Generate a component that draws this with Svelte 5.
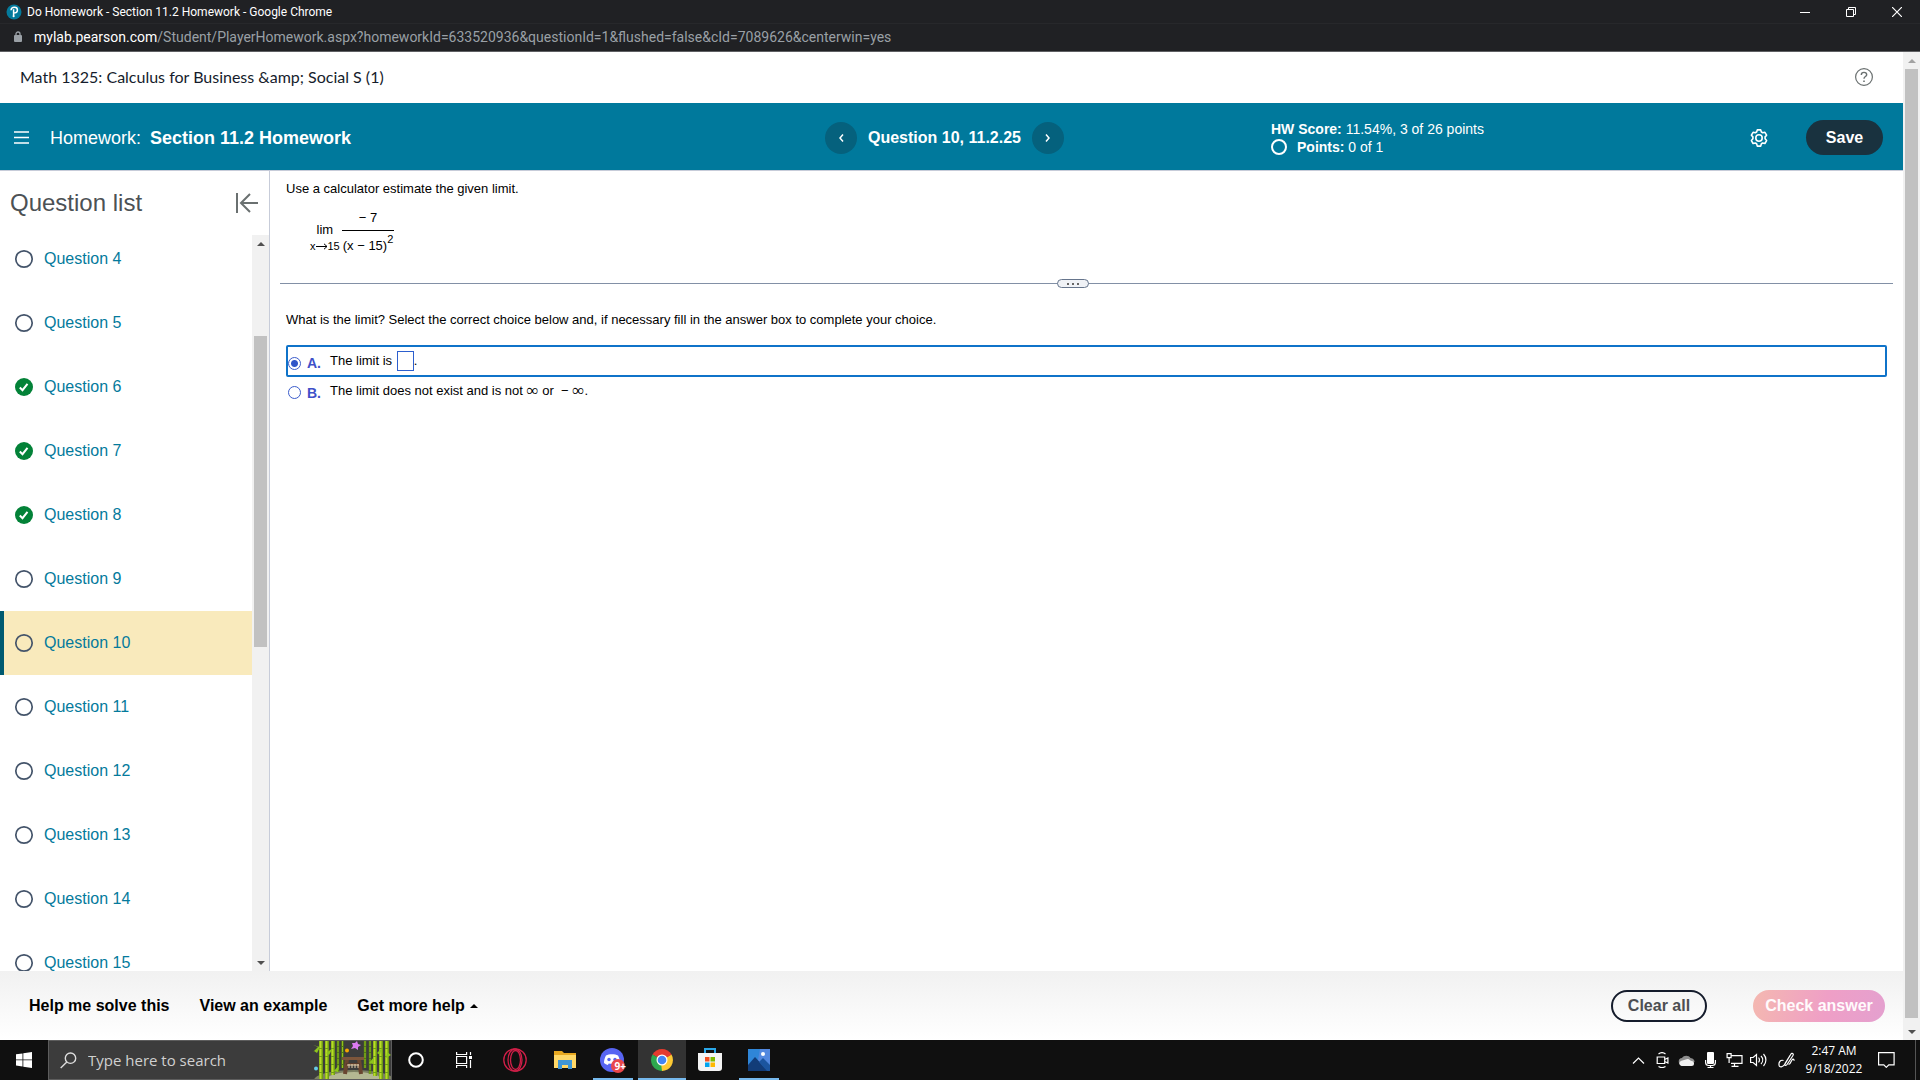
<script>
  const questions = [
    { n: 4 }, { n: 5 }, { n: 6, done: true }, { n: 7, done: true }, { n: 8, done: true }, { n: 9 },
    { n: 10, current: true }, { n: 11 }, { n: 12 }, { n: 13 }, { n: 14 }, { n: 15 },
  ];
  let choice = $state('A');
  let answer = $state('');
  let search = $state('');
</script>

<div class="screen">
  <header class="titlebar">
    <svg class="logo" width="16" height="16" viewBox="0 0 16 16" aria-hidden="true">
      <circle cx="8" cy="8" r="7.5" fill="#047a9c" />
      <path d="M5 6.2C5.2 4.2 6.600 3.300 8.400 3.300c2 0 3 1.100 3 2.600 0 1.900-1.500 3.100-3.900 3.100M7.600 5.300V12.200" fill="none" stroke="#fff" stroke-width="1.500" />
      <circle cx="7.600" cy="12.200" r="1" fill="#fff" />
    </svg>
    <span class="wintitle">Do Homework - Section 11.2 Homework - Google Chrome</span>
    <button class="winbtn" aria-label="Minimize"><svg width="10" height="10" viewBox="0 0 10 10"><path d="M0 5.500h10" stroke="#fff" /></svg></button>
    <button class="winbtn" aria-label="Restore"><svg width="10" height="10" viewBox="0 0 10 10"><path d="M.5 2.500h7v7h-7zM2.500 2.500v-2h7v7h-2" fill="none" stroke="#fff" /></svg></button>
    <button class="winbtn" aria-label="Close"><svg width="10" height="10" viewBox="0 0 10 10"><path d="M0 0l10 10M10 0L0 10" stroke="#fff" stroke-width="1.200" /></svg></button>
  </header>
  <div class="urlbar">
    <svg width="8" height="12" viewBox="0 0 8 12" aria-hidden="true"><path d="M2 5V3a2 2 0 0 1 4 0v2" fill="none" stroke="#9aa0a6" stroke-width="1.300" /><rect y="4" width="8" height="7" rx="1" fill="#9aa0a6" /></svg>
    <span class="url"><b>mylab.pearson.com</b>/Student/PlayerHomework.aspx?homeworkId=633520936&amp;questionId=1&amp;flushed=false&amp;cId=7089626&amp;centerwin=yes</span>
  </div>

  <div class="viewport">
    <div class="page">
      <div class="course">
        <span>Math 1325: Calculus for Business &amp;amp; Social S (1)</span>
        <button class="plain" aria-label="Help">
          <svg width="18" height="18" viewBox="0 0 18 18" fill="none" stroke="#6a7070"><circle cx="9" cy="9" r="8.400" stroke-width="1.200" /><path d="M6.300 7c0-1.700 1.100-2.600 2.700-2.600s2.700.9 2.700 2.300c0 1.900-2.700 1.800-2.700 4.100" stroke-width="1.400" /><path d="M9 12.400v1.600" stroke-width="1.600" /></svg>
        </button>
      </div>

      <div class="bar">
        <div class="assignment">
          <button class="plain" aria-label="Menu"><svg width="15" height="13" viewBox="0 0 15 13"><path d="M0 1h15M0 6.500h15M0 12h15" stroke="#fff" stroke-width="1.500" /></svg></button>
          <h1>Homework:<b>Section 11.2 Homework</b></h1>
        </div>
        <nav class="pager" aria-label="Question">
          <button class="round" aria-label="Previous"><svg width="5" height="8" viewBox="0 0 5 8"><path d="M4 .5L1 4l3 3.500" /></svg></button>
          <b>Question 10, 11.2.25</b>
          <button class="round" aria-label="Next"><svg width="5" height="8" viewBox="0 0 5 8"><path d="M1 .5L4 4 1 7.500" /></svg></button>
        </nav>
        <div class="score">
          <div><b>HW Score:</b> 11.54%, 3 of 26 points</div>
          <div class="points"><i></i><span><b>Points:</b> 0 of 1</span></div>
        </div>
        <div class="actions">
          <button class="plain" aria-label="Settings">
            <svg width="18" height="18" viewBox="0 0 18 18" fill="none" stroke="#fff" stroke-width="1.600"><circle cx="9" cy="9" r="3.200" /><path stroke-linejoin="round" d="M7.300.9h3.400l.7 2.100 1.300.8 2.200-.5 1.700 2.900-1.500 1.700v1.900l1.500 1.800-1.700 2.900-2.200-.5-1.300.8-.7 2.300H7.300l-.7-2.300-1.300-.8-2.200.5-1.700-2.900 1.500-1.800V7.900L1.400 6.200l1.700-2.900 2.200.5L6.600 3z" /></svg>
          </button>
          <button class="save">Save</button>
        </div>
      </div>

      <div class="main">
        <aside>
          <div class="listhead">
            <h2>Question list</h2>
            <button class="plain" aria-label="Collapse list"><svg width="22" height="20" viewBox="0 0 22 20" fill="none" stroke="#6a7070" stroke-width="2"><path d="M1 0v20M22 10H6M14 1l-9 9 9 9" /></svg></button>
          </div>
          <div class="scroller">
            <ul>
              {#each questions as q}
                <li class:current={q.current}>
                  <svg width="20" height="20" viewBox="0 0 20 20" aria-hidden="true">
                    {#if q.done}
                      <circle cx="10" cy="10" r="9" fill="#038238" /><path d="M5.800 10.500l2.700 2.700 5-6.400" fill="none" stroke="#fff" stroke-width="2" />
                    {:else}
                      <circle cx="10" cy="10" r="8.200" fill="none" stroke="#44546a" stroke-width="1.700" />
                    {/if}
                  </svg>
                  <a href="#q{q.n}">Question {q.n}</a>
                </li>
              {/each}
            </ul>
            <div class="track inner" aria-hidden="true"><span class="up"></span><span class="thumb"></span><span class="down"></span></div>
          </div>
        </aside>

        <section class="question">
          <div class="prompt">
            <p>Use a calculator estimate the given limit.</p>
            <div class="math">
              <span class="lim"><span>lim</span><small>x<svg width="12" height="7" viewBox="0 0 12 7"><path d="M0 3.500h11M8 .8l3 2.700-3 2.700" fill="none" stroke="#000" /></svg>15</small></span>
              <span class="frac"><span class="num">&minus; 7</span><span class="den">(x &minus; 15)<sup>2</sup></span></span>
            </div>
          </div>
          <div class="divider"><button aria-label="Resize panels"><i></i><i></i><i></i></button></div>
          <form class="answers">
            <p>What is the limit? Select the correct choice below and, if necessary fill in the answer box to complete your choice.</p>
            <div class="choice" class:selected={choice === 'A'}>
              <input id="a" type="radio" name="c" value="A" bind:group={choice} />
              <label for="a">A.</label>
              <span class="text">The limit is <input class="box" aria-label="Limit" bind:value={answer} />.</span>
            </div>
            <div class="choice" class:selected={choice === 'B'}>
              <input id="b" type="radio" name="c" value="B" bind:group={choice} />
              <label for="b">B.</label>
              <span class="text">The limit does not exist and is not <span class="inf">∞</span> or &nbsp;&minus; <span class="inf">∞</span>.</span>
            </div>
          </form>
        </section>
      </div>

      <footer>
        <button class="link">Help me solve this</button>
        <button class="link">View an example</button>
        <button class="link more">Get more help <svg width="8" height="4" viewBox="0 0 8 4"><path d="M0 4l4-4 4 4z" /></svg></button>
        <button class="clear">Clear all</button>
        <button class="check">Check answer</button>
      </footer>
    </div>
    <div class="track outer" aria-hidden="true"><span class="up"></span><span class="thumb"></span><span class="down"></span></div>
  </div>

  <div class="taskbar">
    <button class="app" aria-label="Start"><svg width="16" height="16" viewBox="0 0 16 16" fill="#fff"><path d="M0 2.300L6.500 1.400v6.100H0zM7.300 1.300L16 0v7.500H7.300zM0 8.300h6.500v6.200L0 13.600zM7.300 8.300H16V16l-8.700-1.200z" /></svg></button>
    <div class="search">
      <svg width="17" height="17" viewBox="0 0 17 17" fill="none" stroke="#ddd" stroke-width="1.400"><circle cx="10.500" cy="6.200" r="5.200" /><path d="M6.800 9.900L.7 16" /></svg>
      <input aria-label="Search" placeholder="Type here to search" bind:value={search} />
      <svg class="art" width="78" height="38" viewBox="0 0 78 38" aria-hidden="true">
        <ellipse cx="41" cy="39" rx="40" ry="10" fill="#7c8062" />
        <ellipse cx="41" cy="39" rx="28" ry="8" fill="#b4b892" />
        <g stroke="#6f9c14" stroke-width="4"><path d="M8 0v38M14 0v38M20 0v34M62 0v35M68 0v38M74 0v38" /></g>
        <g stroke="#4f7a10" stroke-width="2.500"><path d="M25 0v31M29.500 0v27M52 0v27M57 0v33" /></g>
        <g stroke="#b9dc26" stroke-width="2" stroke-dasharray="7 1"><path d="M7.500 0v38M13.500 0v38M19.500 0v34M61.500 0v35M67.500 0v38M73.500 0v38" /></g>
        <g stroke="#93bf1c" stroke-width="1" stroke-dasharray="5 1"><path d="M25 0v31M29.500 0v27M52 0v27M57 0v33" /></g>
        <path d="M0 4l7 2-7 5 5-5zM1 10l6-4-3 6zM13 12l7-5-4 7zM21 30l5-6-1 7zM78 14l-5 3 1-6zM56 22l5-6-1 7zM64 12l5-5-2 7z" fill="#8cc41e" />
        <path d="M34 18l-2 15M46 18l2 15" stroke="#6a4630" stroke-width="4" />
        <path d="M29 17.500h22" stroke="#7d563b" stroke-width="3" /><path d="M33 23h14" stroke="#5c3d2b" stroke-width="2" />
        <path d="M34 24h12M36 23v4M39 23v4M42 23v4M45 23v4" stroke="#e5cfad" />
        <circle cx="34" cy="9.500" r="2" fill="#f7a600" /><circle cx="3" cy="27.500" r="2" fill="#65cbe8" />
        <path d="M39 2l3 0 2-2 1 3 3 1-3 2 0 3-3-2-4 1 2-3z" fill="#dd7bf2" />
      </svg>
    </div>
    <button class="app" aria-label="Cortana"><svg width="16" height="16" viewBox="0 0 16 16"><circle cx="8" cy="8" r="6.800" fill="none" stroke="#fff" stroke-width="2" /></svg></button>
    <button class="app" aria-label="Task view"><svg width="17" height="16" viewBox="0 0 17 16" fill="none" stroke="#fff" stroke-width="1.200"><path d="M.6 0v2.500h10V0M.6 16v-2.500h10V16M.6 4.500h10v7H.6zM14.500 0v3M14.500 8v8" /><path d="M13 4h3v3h-3z" fill="#fff" stroke="none" /></svg></button>
    <button class="app opera" aria-label="Opera GX"><svg width="24" height="24" viewBox="0 0 24 24" fill="none" stroke="#d01f48" stroke-width="1.300"><circle cx="12" cy="12" r="11.200" /><ellipse cx="12" cy="12" rx="7" ry="11" /><ellipse cx="12.500" cy="12" rx="5" ry="9.500" /></svg></button>
    <button class="app files" aria-label="File Explorer"><svg width="22" height="18" viewBox="0 0 22 18"><path d="M0 0h8l2 2h12v15H0z" fill="#e8a820" /><path d="M0 4h22v13H0z" fill="#ffd868" /><path d="M4 9h14v9h-4v-4H8v4H4z" fill="#3f96d6" /></svg></button>
    <button class="app open" aria-label="Discord, 9+ notifications">
      <svg width="26" height="25" viewBox="0 0 26 25"><circle cx="12" cy="12" r="12" fill="#5865f2" /><path d="M6 7.500c3-1.700 9-1.700 12 0 1.300 2.300 2 5 2 7.500-1.200 1-2.500 1.600-3.800 2l-1-1.600c-2 .5-4.400.5-6.400 0l-1 1.600c-1.300-.4-2.600-1-3.800-2 0-2.500.7-5.200 2-7.500z" fill="#fff" /><circle cx="9" cy="11.500" r="1.700" fill="#5865f2" /><circle cx="15" cy="11.500" r="1.700" fill="#5865f2" /><circle cx="18" cy="18" r="7" fill="#e9474b" /></svg>
      <span class="badge">9+</span>
    </button>
    <button class="app open active" aria-label="Chrome"><svg width="22" height="22" viewBox="0 0 22 22"><path d="M11 11L1.500 5.500A11 11 0 0 1 20.500 5.500z" fill="#e33b2e" /><path d="M11 11l9.500-5.500A11 11 0 0 1 11 22z" fill="#fcc934" /><path d="M11 11v11A11 11 0 0 1 1.500 5.500z" fill="#2da94f" /><path d="M11 5.500h9.500L11 11z" fill="#e33b2e" /><path d="M15.800 13.700L11 22l-1-8z" fill="#fcc934" /><path d="M1.500 5.500l4.700 8.200L12 14z" fill="#2da94f" /><circle cx="11" cy="11" r="5.500" fill="#fff" /><circle cx="11" cy="11" r="4.300" fill="#4285f4" /></svg></button>
    <button class="app store" aria-label="Microsoft Store"><svg width="24" height="24" viewBox="0 0 24 24"><path d="M7 5V1h10v4" fill="none" stroke="#2aa8ea" stroke-width="2" /><path d="M0 5h24v15a3 3 0 0 1-3 3H3a3 3 0 0 1-3-3z" fill="#f4f4f4" /><path d="M7 9h4.500v4.500H7z" fill="#f25022" /><path d="M12.500 9H17v4.500h-4.500z" fill="#7fba00" /><path d="M7 14.500h4.500V19H7z" fill="#00a4ef" /><path d="M12.500 14.500H17V19h-4.500z" fill="#ffb900" /></svg></button>
    <button class="app open" aria-label="Photos"><svg width="22" height="22" viewBox="0 0 22 22"><path d="M0 0h22v22H0z" fill="#2f86d8" /><path d="M12 0h10v22H8z" fill="#6a8be4" opacity=".6" /><path d="M0 16L7 8l13 14H0z" fill="#123c78" /><path d="M11 13l4-4 7 7v6h-3z" fill="#1b559f" /><circle cx="15" cy="5" r="2" fill="#fff" /></svg></button>
    <div class="tray">
      <svg width="12" height="7" viewBox="0 0 12 7"><path d="M.5 6.500L6 1l5.500 5.500" /></svg>
      <svg width="12" height="16" viewBox="0 0 12 16"><path d="M.7 5h7.500v6.500H.7zM8.200 7.500L11.400 6v5L8.200 9.500M2 2c2-1.600 5-1.600 7 0M2 14.500c2 1.300 5 1.300 7 0" /></svg>
      <svg width="16" height="11" viewBox="0 0 16 11"><path d="M4 10a3.500 3.500 0 0 1-.5-7A5 5 0 0 1 12 3c3 .5 4 2 4 4z" fill="#8e8e8e" stroke="none" /><path d="M3 11a2.700 2.700 0 0 1 0-5.300L9 4c2 0 3 2 4 2a2.500 2.500 0 0 1 0 5z" fill="#f0f0f0" stroke="none" /></svg>
      <svg width="11" height="16" viewBox="0 0 11 16"><rect x="2" width="7" height="12" rx="1" fill="#fff" stroke="none" /><path d="M.6 8v2.500c0 2 1 3 3 3h3.800c2 0 3-1 3-3V8M5.500 13v2.500M2.500 15.500h6" /></svg>
      <svg width="16" height="14" viewBox="0 0 16 14"><path d="M4.500 2.600h11v7.800h-11M8 10.500v3M5 13.400h7M.6.6h4v4h-4zM2.600 4.600V10" /></svg>
      <svg width="17" height="14" viewBox="0 0 17 14"><path d="M.6 4.500h2.500L6.500 1.500v11L3.100 9.500H.6zM8.500 4.700c1.300 1.300 1.300 3.300 0 4.600M11 3c2.200 2.300 2.200 5.700 0 8M13.500 1c3.200 3.500 3.200 8.500 0 12" /></svg>
      <svg class="pen" width="17" height="16" viewBox="0 0 17 16"><path d="M5.500 8.500C2.500 7.500.6 10 1 13c.3 3 4 2.500 6-1l6-10c1-1.600 3 0 2 1.500L9 12.500c-1 1.600-3 .5-2-1l5-8M10.500 12c2 1 2.500-4 4.500-5l1.500 1.500" /></svg>
      <div class="clock"><span>2:47 AM</span><span>9/18/2022</span></div>
      <svg width="17" height="16" viewBox="0 0 17 16"><path d="M.6.6h15.500v12.200h-5.300L8.300 15.300l-2.500-2.500H.6z" /></svg>
    </div>
    <i class="peek"></i>
  </div>
</div>

<style>
  :global(body) { margin: 0; }
  * { box-sizing: border-box; }
  svg { display: block; flex: none; }
  button { border: 0; padding: 0; background: none; color: inherit; font: inherit; cursor: pointer; }
  h1, h2, p, ul { margin: 0; padding: 0; font-weight: 400; }
  .screen { height: 100vh; display: flex; flex-direction: column; background: #fff; font-family: "Liberation Sans", Arial, sans-serif; overflow: hidden; }
  .titlebar { height: 24px; display: flex; align-items: center; background: #202124; border-bottom: 1px solid #27282b; color: #fff; flex: none; padding-left: 6px; }
  .wintitle { flex: 1; margin-left: 5px; font: 12px/16px Roboto, "Noto Sans", sans-serif; }
  .winbtn { width: 46px; height: 20px; display: grid; place-items: center; }
  .urlbar { height: 28px; flex: none; display: flex; align-items: center; gap: 12px; padding: 0 0 1px 14px; background: #202124; border-bottom: 1px solid #5f6063; color: #9aa0a6; font: 14px/20px Roboto, "Noto Sans", sans-serif; }
  .url b { color: #fff; font-weight: 400; }
  .viewport { flex: 1; min-height: 0; display: flex; }
  .page { flex: 1; min-width: 0; display: flex; flex-direction: column; }
  .course { height: 51px; flex: none; display: flex; align-items: center; justify-content: space-between; padding: 0 30px 2px 20px; font: 16px/24px Lato, sans-serif; color: #151c2c; }
  .bar { height: 68px; flex: none; display: grid; grid-template-columns: 825fr 446fr 478fr 154px; align-items: center; padding-top: 2px; background: #00799c; border-bottom: 1px solid #c7ccd9; color: #fff; }
  .bar b { font-weight: 700; }
  .assignment { display: flex; align-items: center; gap: 21px; padding-left: 14px; }
  h1 { font-size: 18px; line-height: 24px; }
  h1 b { margin-left: 9px; }
  .pager { display: flex; align-items: center; gap: 11px; font-size: 16px; }
  .round { width: 32px; height: 32px; border-radius: 50%; background: #05617d; display: grid; place-items: center; }
  .round path { fill: none; stroke: #fff; stroke-width: 1.5; }
  .score { font-size: 14px; line-height: 18px; }
  .points { display: flex; align-items: center; gap: 10px; }
  .points i { width: 16px; height: 16px; border: 2px solid #fff; border-radius: 50%; }
  .actions { display: flex; justify-content: space-between; align-items: center; padding: 0 20px 0 1px; }
  .save { width: 77px; height: 35px; border-radius: 18px; background: #19323f; font-weight: 700; font-size: 16px; }
  .main { flex: 1; min-height: 0; display: flex; }
  aside { width: 270px; flex: none; border-right: 1px solid #c7ccd9; display: flex; flex-direction: column; }
  .listhead { height: 64px; flex: none; display: flex; align-items: center; justify-content: space-between; padding: 0 11px 0 10px; color: #4c5155; }
  h2 { font-size: 24px; line-height: 32px; }
  .scroller { flex: 1; min-height: 0; overflow: hidden; display: flex; }
  ul { flex: 1; list-style: none; margin-top: -8px; }
  li { height: 64px; display: flex; align-items: center; gap: 10px; padding-left: 14px; font-size: 16px; }
  li.current { background: #f9eabc; border-left: 4px solid #005a70; padding-left: 10px; }
  li a { color: #047a9c; text-decoration: none; }
  .track { width: 17px; flex: none; background: #f1f1f1; display: flex; flex-direction: column; align-items: center; }
  .up, .down { flex: none; width: 17px; height: 17px; display: grid; place-items: center; }
  .up::before, .down::before { content: ""; border: 4px solid transparent; }
  .up::before { border-top: 0; border-bottom-color: #505050; }
  .down::before { border-bottom: 0; border-top-color: #505050; }
  .outer .up::before { border-bottom-color: #a3a3a3; }
  .thumb { width: 13px; background: #c1c1c1; }
  .inner .thumb { height: 311px; margin: 84px 0 auto; }
  .outer .thumb { flex: 1; margin-bottom: 5px; }
  .question { flex: 1; min-width: 0; font-size: 13px; line-height: 16px; color: #000; }
  .prompt { padding: 10px 16px 0; height: 112px; }
  .math { display: flex; gap: 2px; padding: 13px 24px; }
  .lim { display: flex; flex-direction: column; align-items: center; padding-top: 12px; }
  .lim small { display: flex; align-items: center; font-size: 11px; line-height: 16px; }
  .frac { display: flex; flex-direction: column; align-items: center; }
  .num { padding-bottom: 4px; }
  .den { border-top: 1px solid #000; padding: 7px 1px 0; }
  sup { font-size: 11px; line-height: 0; vertical-align: 7px; }
  .divider { height: 1px; background: #8290a6; margin: 0 10px; padding-right: 27px; display: flex; align-items: center; justify-content: center; }
  .divider button { width: 32px; height: 9px; flex: none; border: 1px solid #66758c; border-radius: 5px; background: #f0f2f6; display: flex; gap: 3px; align-items: center; justify-content: center; }
  .divider i { width: 2px; height: 2px; background: #666; }
  .answers { padding: 28px 16px 0; }
  .answers p { margin-bottom: 17px; }
  .choice { height: 32px; display: flex; align-items: center; border: 2px solid transparent; border-radius: 2px; }
  .choice + .choice { height: 27px; }
  .choice.selected { border-color: #0f73c9; }
  .choice input[type="radio"] { appearance: none; width: 13px; height: 13px; margin: 4px 0 0; border: 1px solid #3b5ccb; border-radius: 50%; background: #fff; }
  .choice input[type="radio"]:checked { background: radial-gradient(circle, #3056c8 3px, #fff 4px); }
  .choice label { width: 23px; margin: 4px 0 0 6px; color: #3f50c8; font-size: 14px; font-weight: 700; }
  .text { display: flex; align-items: center; white-space: pre; }
  .box { width: 17px; height: 20px; border: 1px solid #2c5fce; padding: 0; margin-left: 1px; }
  .inf { font-family: "Liberation Serif", serif; font-size: 17px; }
  footer { height: 69px; flex: none; display: flex; align-items: center; padding: 0 18px 0 29px; background: linear-gradient(#f1f1f1, #fff); font-size: 16px; font-weight: 700; }
  .link { margin-right: 30px; display: flex; align-items: center; gap: 5px; }
  .more { margin-right: auto; }
  .clear { width: 96px; height: 32px; border: 2px solid #151c2c; border-radius: 16px; color: #4d4f52; margin-right: 46px; }
  .check { width: 132px; height: 32px; border-radius: 16px; color: #fffafc; background: linear-gradient(100deg, #f4b8b0, #ef9fc6 55%, #e4a0cf); }
  .taskbar { height: 40px; flex: none; display: flex; background: #101010; color: #fff; font-family: "Open Sans", "Noto Sans", sans-serif; }
  .app { width: 48px; display: grid; place-items: center; position: relative; flex: none; border-bottom: 2px solid transparent; border-top: 2px solid transparent; }
  .opera { width: 54px; }
  .files { width: 46px; }
  .open { width: 40px; margin: 0 5px; border-bottom-color: #76b9ed; }
  .active { width: 48px; margin: 0; background: #333; border-top-color: #333; }
  .badge { position: absolute; right: 7px; bottom: 7px; font: 700 10px/10px "Open Sans", sans-serif; }
  .search { width: 344px; display: flex; align-items: center; background: #3c3c3c; border: 1px solid #5d5d5d; padding-left: 11px; }
  .search input { flex: 1; min-width: 0; border: 0; background: none; outline: none; padding: 0 0 0 11px; color: #ddd; font: 15px/20px "Open Sans", "Noto Sans", sans-serif; }
  .search input::placeholder { color: #d0d0d0; opacity: 1; }
  .tray { margin-left: auto; display: flex; align-items: center; gap: 7px; }
  .tray svg { width: 17px; fill: none; stroke: #fff; stroke-width: 1.2; }
  .tray .pen { margin-left: 4px; }
  .clock { width: 60px; margin: 0 7px 0 2px; display: flex; flex-direction: column; align-items: center; font-size: 12px; line-height: 18px; white-space: nowrap; }
  .peek { width: 1px; background: #555; margin: 0 4px 0 20px; }
</style>
